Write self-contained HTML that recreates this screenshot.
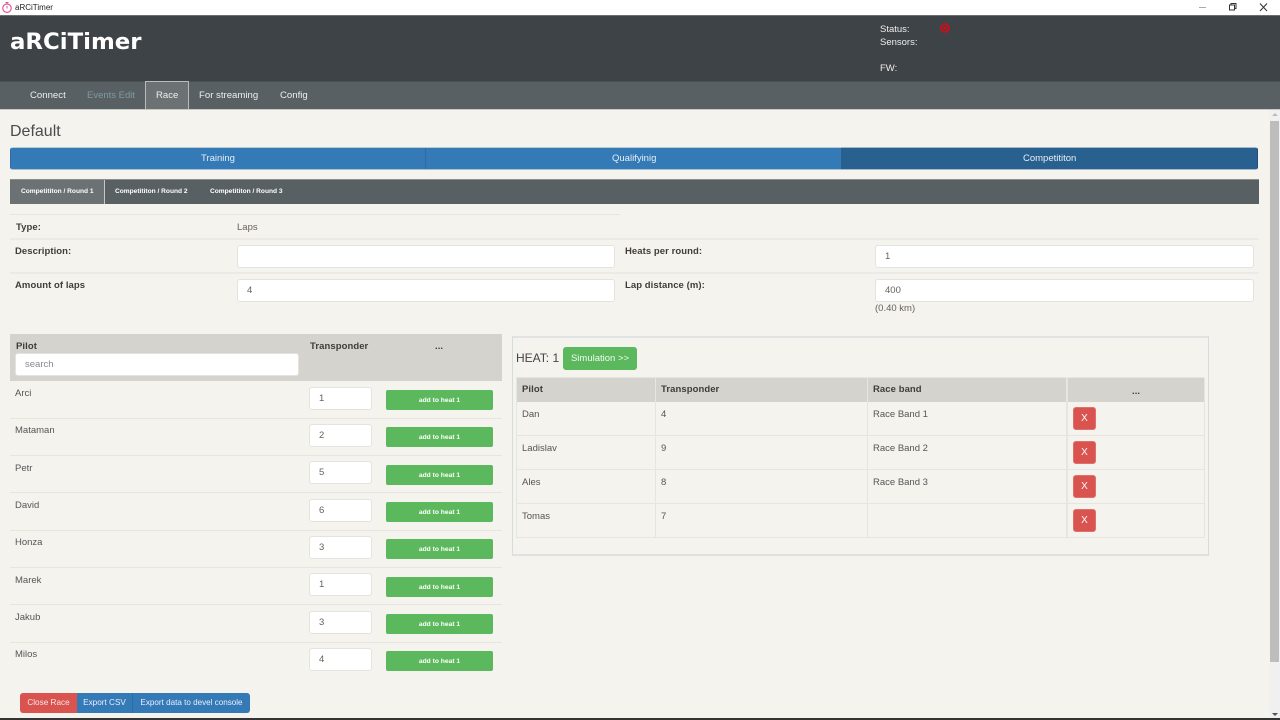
<!DOCTYPE html>
<html><head><meta charset="utf-8"><title>aRCiTimer</title>
<style>
html,body{margin:0;padding:0;width:1280px;height:720px;overflow:hidden;background:#f4f3ee;font-family:"Liberation Sans",sans-serif;font-size:9.5px;color:#555}
.a{position:absolute;box-sizing:border-box}
.t{position:absolute;white-space:nowrap;line-height:12px;margin-top:1px}
.b{font-weight:bold;color:#403d39;font-size:9.5px;letter-spacing:.07px}
.w{color:#fff}
.nav{color:#eee;font-size:9.6px}
.inp{position:absolute;box-sizing:border-box;background:#fff;border:1px solid #e3e3e0;border-radius:3px;height:23px;color:#66615b;font-size:9.5px;line-height:21px;padding-left:9px}
.grn{position:absolute;box-sizing:border-box;left:386px;width:107px;height:20px;background:#5cb85c;border-radius:2px;color:#fff;font-weight:bold;font-size:6.7px;line-height:21px;text-align:center}
.hr{position:absolute;height:1px;background:#e6e5e0}
.hr2{position:absolute;height:2px;background:#eceae6}
.red{position:absolute;left:1073px;width:23px;height:23px;box-sizing:border-box;background:#d9534f;border:1px solid #e0706c;border-radius:3px;color:#fff;font-size:10px;line-height:21px;text-align:center}
.tab{position:absolute;top:0;height:24px;line-height:24px;color:#fff;font-weight:bold;font-size:6.6px;white-space:nowrap}
</style></head><body>

<!-- title bar -->
<div class="a" style="left:0;top:0;width:1280px;height:15px;background:#fff"></div>
<svg class="a" style="left:1px;top:1px" width="12" height="13" viewBox="0 0 12 13"><circle cx="6" cy="7.2" r="4.2" fill="none" stroke="#e0559a" stroke-width="1.2"/><path d="M4.5 1.5h3M6 1.5v1.500M6 5v2.500" fill="none" stroke="#e0559a" stroke-width="1"/></svg>
<div class="t" style="left:15px;top:1px;font-size:8px;color:#222">aRCiTimer</div>
<svg class="a" style="left:1197px;top:2px" width="71" height="11" viewBox="0 0 71 11"><path d="M2 5.500h7" stroke="#aaa" stroke-width="1"/><path d="M32.500 3h5v5h-5zM34 3V1.500h5v5h-1.500" fill="none" stroke="#333" stroke-width="1"/><path d="M63 1.500l7 7.500M70 1.500l-7 7.500" stroke="#333" stroke-width="1" fill="none"/></svg>

<!-- header -->
<div class="a" style="left:0;top:15px;width:1280px;height:67px;background:#3e4347;border-top:1px solid #6a6e70;border-bottom:1px solid #4a4f52"></div>
<div class="t w" style="left:10px;top:29px;margin-top:0;line-height:26px;font-family:'DejaVu Sans',sans-serif;font-size:22.5px;font-weight:bold;transform-origin:0 50%;transform:scaleX(1.015)">aRCiTimer</div>
<div class="t" style="left:880px;top:23px;color:#eee">Status:</div>
<div class="t" style="left:880px;top:36px;color:#eee">Sensors:</div>
<div class="t" style="left:880px;top:62px;color:#eee">FW:</div>
<svg class="a" style="left:940px;top:23px" width="10" height="10" viewBox="0 0 10 10"><circle cx="5" cy="5" r="4" fill="none" stroke="#ee0010" stroke-width="1.400"/><path d="M3.300 3.300l3.400 3.400M6.700 3.300l-3.400 3.400" stroke="#ee0010" stroke-width="1.200"/></svg>

<!-- nav -->
<div class="a" style="left:0;top:82px;width:1280px;height:28px;background:#596063;border-bottom:1px solid #c9c9c6"></div>
<div class="a" style="left:145px;top:81px;width:44px;height:29px;background:#6c7174;border:1px solid #b8bcbd;border-bottom:1px solid #c9c9c6"></div>
<div class="t nav" style="left:30px;top:89px">Connect</div>
<div class="t" style="left:87px;top:89px;color:#7f9aa3">Events Edit</div>
<div class="t nav" style="left:156px;top:89px">Race</div>
<div class="t nav" style="left:199px;top:89px">For streaming</div>
<div class="t nav" style="left:280px;top:89px">Config</div>

<!-- scrollbar -->
<div class="a" style="left:1270px;top:110px;width:10px;height:608px;background:#f0f0f0"></div>
<div class="a" style="left:1270px;top:121px;width:9px;height:541px;background:#bdbdbd"></div>
<svg class="a" style="left:1271px;top:112px" width="8" height="5" viewBox="0 0 8 5"><path d="M1 4h6L4 1z" fill="#bbb"/></svg>
<svg class="a" style="left:1271px;top:712px" width="8" height="5" viewBox="0 0 8 5"><path d="M1 1h6L4 4z" fill="#505050"/></svg>
<div class="a" style="left:0;top:718px;width:1280px;height:2px;background:#333"></div>

<!-- title -->
<div class="t" style="left:10px;top:122px;font-size:16px;line-height:18px;color:#4b4b4b">Default</div>

<!-- main tabs -->
<div class="a" style="left:10px;top:147px;width:1248px;height:23px;background:#337ab7;border-radius:3px;border:1px solid #2e6da4;border-top-color:#b9cbd9;border-bottom-color:#a9c0d3"></div>
<div class="a" style="left:425px;top:148px;width:1px;height:21px;background:#2e6da4"></div>
<div class="a" style="left:841px;top:147px;width:417px;height:23px;background:#286090;border-radius:0 3px 3px 0;border:1px solid #204d74;border-left:0;border-top-color:#a5b8c8;border-bottom-color:#a5b8c8"></div>
<div class="t" style="left:201px;top:152px;color:#e6eef6">Training</div>
<div class="t" style="left:612px;top:152px;color:#e6eef6">Qualifyinig</div>
<div class="t" style="left:1023px;top:152px;color:#e6eef6">Competititon</div>

<!-- sub tabs -->
<div class="a" style="left:10px;top:179px;width:1249px;height:25px;background:#596063;border-top:1px solid #8a8e8f">
  <div class="a" style="left:0;top:0;width:95px;height:24px;background:#6c7174;border-right:1px solid #c5c8c9"></div>
  <div class="tab" style="left:11px">Competititon / Round 1</div>
  <div class="tab" style="left:105px">Competititon / Round 2</div>
  <div class="tab" style="left:200px">Competititon / Round 3</div>
</div>

<!-- form -->
<div class="hr" style="left:10px;top:214px;width:610px"></div>
<div class="t b" style="left:16px;top:221px">Type:</div>
<div class="t" style="left:237px;top:221px;color:#66615b">Laps</div>
<div class="hr2" style="left:10px;top:238px;width:1249px"></div>
<div class="t b" style="left:15px;top:245px">Description:</div>
<div class="inp" style="left:237px;top:245px;width:378px"></div>
<div class="t b" style="left:625px;top:245px">Heats per round:</div>
<div class="inp" style="left:875px;top:245px;width:379px">1</div>
<div class="hr2" style="left:10px;top:272px;width:1249px"></div>
<div class="t b" style="left:15px;top:279px">Amount of laps</div>
<div class="inp" style="left:237px;top:279px;width:378px">4</div>
<div class="t b" style="left:625px;top:279px">Lap distance (m):</div>
<div class="inp" style="left:875px;top:279px;width:379px">400</div>
<div class="t" style="left:875px;top:302px;color:#66615b">(0.40 km)</div>

<!-- pilot table -->
<div class="a" style="left:10px;top:334px;width:492px;height:47px;background:#d4d3ce"></div>
<div class="t b" style="left:16px;top:340px">Pilot</div>
<div class="t b" style="left:310px;top:340px">Transponder</div>
<div class="t b" style="left:435px;top:341px;margin-top:0">...</div>
<div class="inp" style="left:15px;top:353px;width:284px;color:#888;padding-left:9px">search</div>

<div class="t" style="left:15px;top:387px">Arci</div><div class="inp" style="left:309px;top:387px;width:63px">1</div><div class="grn" style="top:390px">add to heat 1</div><div class="hr" style="left:10px;top:418px;width:492px"></div>
<div class="t" style="left:15px;top:424px">Mataman</div><div class="inp" style="left:309px;top:424px;width:63px">2</div><div class="grn" style="top:427px">add to heat 1</div><div class="hr" style="left:10px;top:455px;width:492px"></div>
<div class="t" style="left:15px;top:462px">Petr</div><div class="inp" style="left:309px;top:461px;width:63px">5</div><div class="grn" style="top:465px">add to heat 1</div><div class="hr" style="left:10px;top:492px;width:492px"></div>
<div class="t" style="left:15px;top:499px">David</div><div class="inp" style="left:309px;top:499px;width:63px">6</div><div class="grn" style="top:502px">add to heat 1</div><div class="hr" style="left:10px;top:530px;width:492px"></div>
<div class="t" style="left:15px;top:536px">Honza</div><div class="inp" style="left:309px;top:536px;width:63px">3</div><div class="grn" style="top:539px">add to heat 1</div><div class="hr" style="left:10px;top:567px;width:492px"></div>
<div class="t" style="left:15px;top:574px">Marek</div><div class="inp" style="left:309px;top:573px;width:63px">1</div><div class="grn" style="top:577px">add to heat 1</div><div class="hr" style="left:10px;top:604px;width:492px"></div>
<div class="t" style="left:15px;top:611px">Jakub</div><div class="inp" style="left:309px;top:611px;width:63px">3</div><div class="grn" style="top:614px">add to heat 1</div><div class="hr" style="left:10px;top:642px;width:492px"></div>
<div class="t" style="left:15px;top:648px">Milos</div><div class="inp" style="left:309px;top:648px;width:63px">4</div><div class="grn" style="top:651px">add to heat 1</div>

<!-- bottom buttons -->
<div class="a" style="left:20px;top:693px;width:57px;height:20px;background:#d9534f;border-radius:3px 0 0 3px;color:#f5e8e8;font-size:8.2px;line-height:20px;text-align:center">Close Race</div>
<div class="a" style="left:77px;top:693px;width:56px;height:20px;background:#337ab7;color:#eef;font-size:8.2px;line-height:20px;text-align:center;border-right:1px solid #2e6da4">Export CSV</div>
<div class="a" style="left:133px;top:693px;width:117px;height:20px;background:#337ab7;border-radius:0 3px 3px 0;color:#eef;font-size:8.1px;line-height:20px;text-align:center">Export data to devel console</div>

<!-- heat panel -->
<div class="a" style="left:512px;top:336px;width:697px;height:220px;border:1px solid #d5dcdd;border-top:2px solid #e0e3e1;border-bottom:2px solid #e0e2e0"></div>
<div class="t" style="left:516px;top:351px;margin-top:0;font-size:12px;line-height:14px;color:#444">HEAT: 1</div>
<div class="a" style="left:563px;top:347px;width:74px;height:23px;background:#5cb85c;border-radius:3px;color:#f2f8f2;font-size:9.5px;line-height:23px;text-align:center">Simulation &gt;&gt;</div>

<div class="a" style="left:516px;top:377px;width:689px;height:25px;background:#d4d3ce"></div>
<div class="a" style="left:516px;top:377px;width:689px;height:161px;border:1px solid #e6e5e0"></div>
<div class="a" style="left:655px;top:377px;width:1px;height:161px;background:#e6e5e0"></div>
<div class="a" style="left:867px;top:377px;width:1px;height:161px;background:#e6e5e0"></div>
<div class="a" style="left:1066px;top:377px;width:2px;height:161px;background:#e6e5e0"></div>
<div class="t b" style="left:522px;top:383px">Pilot</div>
<div class="t b" style="left:661px;top:383px">Transponder</div>
<div class="t b" style="left:873px;top:383px">Race band</div>
<div class="t b" style="left:1132px;top:385px">...</div>

<div class="t" style="left:522px;top:408px">Dan</div><div class="t" style="left:661px;top:408px">4</div><div class="t" style="left:873px;top:408px">Race Band 1</div><div class="red" style="top:407px">X</div>
<div class="hr" style="left:516px;top:435px;width:689px"></div>
<div class="t" style="left:522px;top:442px">Ladislav</div><div class="t" style="left:661px;top:442px">9</div><div class="t" style="left:873px;top:442px">Race Band 2</div><div class="red" style="top:441px">X</div>
<div class="hr" style="left:516px;top:469px;width:689px"></div>
<div class="t" style="left:522px;top:476px">Ales</div><div class="t" style="left:661px;top:476px">8</div><div class="t" style="left:873px;top:476px">Race Band 3</div><div class="red" style="top:475px">X</div>
<div class="hr" style="left:516px;top:503px;width:689px"></div>
<div class="t" style="left:522px;top:510px">Tomas</div><div class="t" style="left:661px;top:510px">7</div><div class="red" style="top:509px">X</div>

</body></html>
